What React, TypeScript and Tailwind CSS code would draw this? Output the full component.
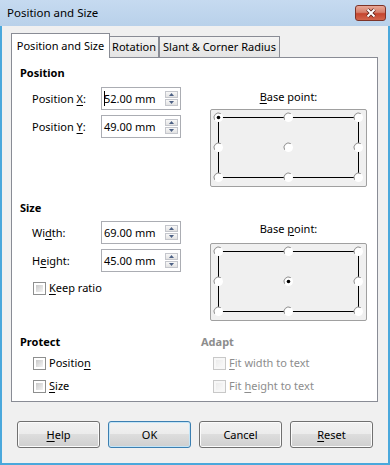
import type { ReactNode } from "react";

function U({ children }: { children: ReactNode }) {
  return <span className="underline underline-offset-[2px]">{children}</span>;
}

function SpinArrow({ down }: { down?: boolean }) {
  return (
    <div className="flex h-[7px] w-[13px] items-center justify-center border border-[#c4c6cc] bg-[linear-gradient(to_bottom,#f8f8f8,#e2e2e2)]">
      <svg width="5" height="3" viewBox="0 0 5 3">
        <path d={down ? "M0 0H5L2.5 3Z" : "M0 3H5L2.5 0Z"} fill="#4d6185" />
      </svg>
    </div>
  );
}

function SpinField({ value, caret }: { value: string; caret?: boolean }) {
  return (
    <div className="flex h-[23px] w-[80px] items-center border border-[#abadb3] bg-white px-[2px]">
      <div className="flex flex-1 items-center">
        {caret && <span className="-mr-px inline-block h-[15px] w-px bg-black" />}
        <span>{value}</span>
      </div>
      <div className="flex flex-col gap-px">
        <SpinArrow />
        <SpinArrow down />
      </div>
    </div>
  );
}

function FieldRow({
  label,
  value,
  caret,
  className,
}: {
  label: ReactNode;
  value: string;
  caret?: boolean;
  className: string;
}) {
  return (
    <div className={`flex items-center ${className}`}>
      <span className="w-[89px] pl-[20px]">{label}</span>
      <SpinField value={value} caret={caret} />
    </div>
  );
}

function Check({ disabled }: { disabled?: boolean }) {
  return (
    <span
      className={`flex h-[13px] w-[13px] border p-[2px] ${
        disabled ? "border-[#c8c8c8] bg-[#f7f7f7]" : "border-[#8e8f8f] bg-white"
      }`}
    >
      <span
        className={`flex-1 ${
          disabled
            ? "bg-[linear-gradient(135deg,#ececec,#f8f8f8)]"
            : "bg-[linear-gradient(135deg,#c9c9c9,#f4f4f4)]"
        }`}
      />
    </span>
  );
}

function CheckRow({
  children,
  disabled,
  className,
}: {
  children: ReactNode;
  disabled?: boolean;
  className: string;
}) {
  return (
    <div className={`flex h-[16px] items-center gap-[3px] ${className} ${disabled ? "text-[#8d8d8d]" : ""}`}>
      <Check disabled={disabled} />
      <span>{children}</span>
    </div>
  );
}

function Radio({ x, y, on }: { x: number; y: number; on: boolean }) {
  const r = 4.5;
  const a1 = (150 * Math.PI) / 180;
  const a2 = (300 * Math.PI) / 180;
  return (
    <g>
      <circle cx={x} cy={y} r={r} fill="#fff" />
      <path
        d={`M${x + r * Math.cos(a1)} ${y + r * Math.sin(a1)} A${r} ${r} 0 0 1 ${x + r * Math.cos(a2)} ${y + r * Math.sin(a2)}`}
        fill="none"
        stroke="#8c8c8c"
        strokeWidth="1"
      />
      {on && <circle cx={x} cy={y} r={1.8} fill="#000" />}
    </g>
  );
}

function BasePoint({ sel }: { sel: number }) {
  const xs = [7.5, 77.5, 147.5];
  const ys = [7.5, 37.5, 67.5];
  return (
    <div className="h-[78px] w-[157px] rounded-[2px] border border-[#a0a0a0] bg-[#f0f0f0]">
      <svg width="155" height="76" viewBox="0 0 155 76">
        <rect x={7.5} y={7.5} width={140} height={60} fill="none" stroke="#000" strokeWidth="1" />
        {ys.map((y, r) =>
          xs.map((x, c) => <Radio key={`${r}-${c}`} x={x} y={y} on={r * 3 + c === sel} />)
        )}
      </svg>
    </div>
  );
}

function Btn({ children, def }: { children: ReactNode; def?: boolean }) {
  return (
    <div
      className={`flex h-[27px] w-[83px] items-center justify-center rounded-[3px] border bg-[linear-gradient(to_bottom,#f2f2f2_0%,#ebebeb_50%,#dddddd_50%,#cfcfcf_100%)] ${
        def
          ? "border-[#3c7fb1] shadow-[inset_0_0_0_1px_#c4e5f7]"
          : "border-[#707070] shadow-[inset_0_0_0_1px_#fbfbfb]"
      }`}
    >
      {children}
    </div>
  );
}

export default function App() {
  return (
    <div className="flex h-[465px] w-[390px] flex-col overflow-hidden bg-[#f0f0f0] font-['Noto_Sans',sans-serif] text-[11px] leading-[16px] text-black">
      {/* title bar */}
      <div className="flex h-[26px] shrink-0 items-center justify-between bg-[linear-gradient(to_bottom,#c6daf0,#b9d1ea)] pl-[7px] pr-[4px]">
        <span className="text-[11.5px]">Position and Size</span>
        <div className="flex h-[16px] w-[31px] items-center justify-center rounded-[3px] border border-[#7d3328] bg-[linear-gradient(to_bottom,#e9a898_0%,#d6806c_45%,#c5452e_55%,#d2654c_100%)]">
          <svg width="12" height="10" viewBox="0 0 12 10">
            <path d="M2.5 1.5L9.5 8.5M9.5 1.5L2.5 8.5" stroke="#5a1d15" strokeWidth="3.6" />
            <path d="M2.5 1.5L9.5 8.5M9.5 1.5L2.5 8.5" stroke="#fff" strokeWidth="2" />
          </svg>
        </div>
      </div>

      {/* body */}
      <div className="flex flex-1 flex-col border-x-2 border-b-2 border-[#4aa8dc]">
        {/* tabs */}
        <div className="mt-[7px] flex h-[24px] items-end whitespace-nowrap pl-[9px]">
          <div className="relative z-10 -mb-px flex h-[25px] w-[99px] items-center justify-center border border-b-0 border-[#898c95] bg-white pb-[1px]">
            Position and Size
          </div>
          <div className="-ml-px flex h-[21px] w-[50px] items-center justify-center border border-b-0 border-[#898c95] bg-[linear-gradient(to_bottom,#f3f3f3,#e4e4e4)]">
            Rotation
          </div>
          <div className="flex h-[21px] w-[121px] items-center justify-center border border-b-0 border-[#898c95] bg-[linear-gradient(to_bottom,#f3f3f3,#e4e4e4)]">
            Slant &amp; Corner Radius
          </div>
        </div>

        {/* tab page */}
        <div className="ml-[9px] flex h-[345px] w-[367px] flex-col border border-[#898c95] bg-white">
          {/* Position */}
          <div className="flex items-start">
            <div className="flex w-[198px] flex-col">
              <div className="mt-[7px] pl-[8px] font-bold">Position</div>
              <FieldRow
                className="mt-[6px]"
                label={<>Position <U>X</U>:</>}
                value="52.00 mm"
                caret
              />
              <FieldRow className="mt-[5px]" label={<>Position <U>Y</U>:</>} value="49.00 mm" />
            </div>
            <div className="flex flex-col">
              <div className="mt-[31px] text-center">
                <U>B</U>ase point:
              </div>
              <div className="mt-[4px]">
                <BasePoint sel={0} />
              </div>
            </div>
          </div>

          {/* Size */}
          <div className="flex items-start">
            <div className="flex w-[198px] flex-col">
              <div className="mt-[13px] pl-[8px] font-bold">Size</div>
              <FieldRow className="mt-[5px]" label={<>Wi<U>d</U>th:</>} value="69.00 mm" />
              <FieldRow className="mt-[5px]" label={<>H<U>e</U>ight:</>} value="45.00 mm" />
              <CheckRow className="mt-[8px] pl-[21px]">
                <U>K</U>eep ratio
              </CheckRow>
            </div>
            <div className="flex flex-col">
              <div className="mt-[34px] text-center">
                Base <U>p</U>oint:
              </div>
              <div className="mt-[6px]">
                <BasePoint sel={4} />
              </div>
            </div>
          </div>

          {/* Protect / Adapt */}
          <div className="flex items-start">
            <div className="flex w-[189px] flex-col">
              <div className="mt-[13px] pl-[8px] font-bold">Protect</div>
              <CheckRow className="mt-[5px] pl-[21px]">
                Positio<U>n</U>
              </CheckRow>
              <CheckRow className="mt-[7px] pl-[21px]">
                <U>S</U>ize
              </CheckRow>
            </div>
            <div className="flex flex-col">
              <div className="mt-[13px] font-bold text-[#8d8d8d]">Adapt</div>
              <CheckRow disabled className="mt-[5px] pl-[12px]">
                <U>F</U>it width to text
              </CheckRow>
              <CheckRow disabled className="mt-[7px] pl-[12px]">
                Fit <U>h</U>eight to text
              </CheckRow>
            </div>
          </div>
        </div>

        {/* buttons */}
        <div className="mt-[19px] flex gap-[8px] pl-[15px]">
          <Btn>
            <U>H</U>elp
          </Btn>
          <Btn def>OK</Btn>
          <Btn>Cancel</Btn>
          <Btn>
            <U>R</U>eset
          </Btn>
        </div>
      </div>
    </div>
  );
}
